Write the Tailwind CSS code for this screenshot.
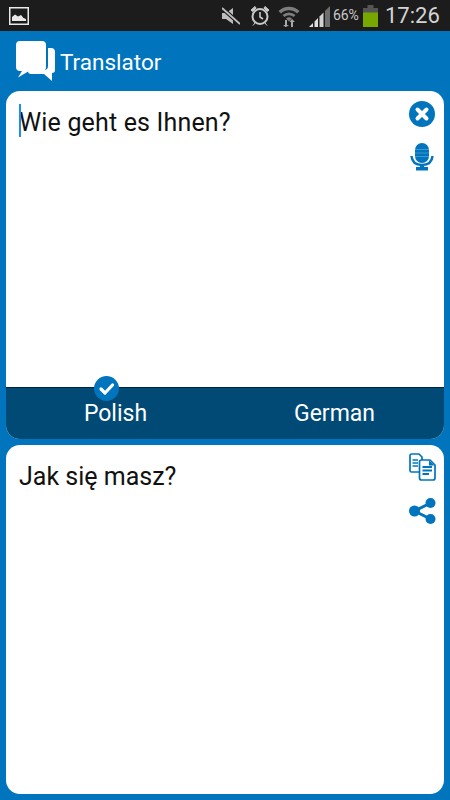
<!DOCTYPE html>
<html lang="en">
<head>
  <meta charset="UTF-8">
  <meta name="viewport" content="width=device-width, initial-scale=1.0">
  <title>Translator</title>
  <script src="https://cdn.jsdelivr.net/npm/@tailwindcss/browser@4"></script>
</head>
<body class="bg-[#0075be] font-['Roboto',sans-serif]">
  <div class="flex flex-col w-[450px] h-[800px] overflow-hidden">
    <!-- status bar -->
    <div class="flex items-center h-[31px] bg-[#1c1c1c] pl-[9px] shrink-0">
      <svg width="20" height="18" viewBox="0 0 20 18">
        <rect x="0.75" y="0.75" width="18.5" height="16.5" fill="none" stroke="#e8e8e8" stroke-width="1.5"/>
        <path d="M3 14V10L6 7.500 9 9.500 12 8 14.500 11 17 12V14Z" fill="#e8e8e8"/>
      </svg>
      <svg class="ml-[193px]" width="18" height="20" viewBox="0 0 18 20">
        <path d="M0 7H4L11 2V18L4 13H0Z" fill="#bdbdbd"/>
        <path d="M0 2L18 18" stroke="#1c1c1c" stroke-width="4"/>
        <path d="M0 2L18 18" stroke="#bdbdbd" stroke-width="1.800"/>
      </svg>
      <svg class="ml-[10px]" width="20" height="21" viewBox="0 0 20 21">
        <circle cx="10" cy="11.500" r="7.500" fill="none" stroke="#c8c8c8" stroke-width="2"/>
        <path d="M10 7V12L13 14" fill="none" stroke="#c8c8c8" stroke-width="1.600"/>
        <path d="M1 5L5 1.500 6 3 2.500 6.500ZM19 5L15 1.500 14 3 17.500 6.500ZM5 18L3 20.500M15 18L17 20.500" fill="#c8c8c8" stroke="#c8c8c8"/>
      </svg>
      <svg class="ml-[8px]" width="22" height="22" viewBox="0 0 22 22">
        <path d="M0.500 6A15 15 0 0 1 21.500 6L19 8.500A11.500 11.500 0 0 0 3 8.500Z" fill="#7d7d7d"/>
        <path d="M4.500 10A9.500 9.500 0 0 1 17.500 10L15.500 12A6.500 6.500 0 0 0 6.500 12Z" fill="#7d7d7d"/>
        <path d="M8 13.500A4.500 4.500 0 0 1 14 13.500L11 16.500Z" fill="#7d7d7d"/>
        <path d="M7 15V20H5L8 22.500 8 22 11 20H9V15ZM15 22V17H17L14 14 11.500 17H13V22Z" fill="#a8a8a8"/>
      </svg>
      <svg class="ml-[9px]" width="21" height="22" viewBox="0 0 21 22">
        <path d="M0 22L4 18V22ZM5.500 16.500L9 13V22H5.500Z" fill="#e0e0e0"/>
        <path d="M10.500 11.500L14.500 7.500V22H10.500Z" fill="#d0d0d0"/>
        <path d="M16 6L21 1V22H16Z" fill="#6e6e6e"/>
      </svg>
      <span class="ml-[3px] w-[27px] text-[14px] leading-[31px] text-[#c8c8c8] tracking-[-0.1px] whitespace-nowrap">66%</span>
      <svg class="ml-[3px]" width="15" height="22" viewBox="0 0 15 22">
        <rect x="4.500" y="0" width="6" height="3" fill="#555"/>
        <rect x="0" y="3" width="15" height="5" fill="#555"/>
        <rect x="0" y="7.500" width="15" height="14.500" fill="#76a800"/>
      </svg>
      <span class="ml-[7px] text-[22px] leading-[31px] text-[#d4d4d4] whitespace-nowrap">17:26</span>
    </div>

    <!-- app bar -->
    <div class="flex items-center h-[60px] pl-[16px] shrink-0">
      <svg width="40" height="41" viewBox="0 0 40 41">
        <path d="M4 0H26A4 4 0 0 1 30 4V26A4 4 0 0 1 26 30H13L2 36.500 6 30H4A4 4 0 0 1 0 26V4A4 4 0 0 1 4 0Z" fill="#fff"/>
        <path d="M32 7H35A4 4 0 0 1 39 11V29A3 3 0 0 1 36 32V40L28 33H15A3 3 0 0 1 12 30V29H28A4 4 0 0 0 32 25Z" fill="#fff"/>
      </svg>
      <span class="ml-[4px] mt-[3px] text-[22.500px] text-white">Translator</span>
    </div>

    <!-- input card -->
    <div class="flex flex-col mx-[6px] h-[348px] bg-white rounded-[14px] overflow-hidden shrink-0">
      <div class="relative flex-1 pl-[13px] pr-[44px] pt-[13px]">
        <div class="relative pt-[2px] text-[25px] tracking-[0.17px] leading-[33px] text-[#111]">
          <span class="absolute left-0 top-[0px] w-[2px] h-[33px] bg-[#1d8df0]"></span>Wie geht es Ihnen?
        </div>
        <div class="absolute right-[9px] top-[10px] flex flex-col items-center gap-[16px]">
          <svg width="26" height="26" viewBox="0 0 26 26">
            <circle cx="13" cy="13" r="13" fill="#0075be"/>
            <path d="M8.500 8.500L17.500 17.500M17.500 8.500L8.500 17.500" stroke="#fff" stroke-width="4" stroke-linecap="round"/>
          </svg>
          <svg width="24" height="28" viewBox="0 0 24 28">
            <rect x="5" y="0" width="14" height="20" rx="7" fill="#0075be"/>
            <path d="M5 6.500H19M5 10H19M5 13.500H19" stroke="#fff" stroke-opacity="0.300" stroke-width="0.800"/>
            <path d="M1.500 13C2 19 6 22 12 22S22 19 22.500 13" fill="none" stroke="#0075be" stroke-width="2.500"/>
            <path d="M10 22H14V24H18V27.500H6V24H10Z" fill="#0075be"/>
          </svg>
        </div>
      </div>
      <div class="relative flex h-[52px] bg-[#004a75] border-t border-[#00243f] shrink-0">
        <div class="flex-1 text-center text-[23px] leading-[52px] text-white">Polish</div>
        <div class="flex-1 text-center text-[23px] leading-[52px] text-white">German</div>
        <svg class="absolute left-[88px] top-[-12px]" width="25" height="25" viewBox="0 0 25 25">
          <circle cx="12.500" cy="12.500" r="12.500" fill="#0075be"/>
          <path d="M7 13L11 17 18.500 9" fill="none" stroke="#fff" stroke-width="3.200" stroke-linecap="round" stroke-linejoin="round"/>
        </svg>
      </div>
    </div>

    <!-- output card -->
    <div class="relative mx-[6px] mt-[6px] h-[349px] bg-white rounded-[14px] pl-[13px] pr-[44px] pt-[15px] shrink-0">
      <div class="text-[25px] leading-[33px] text-[#111]">Jak się masz?</div>
      <div class="absolute right-[8px] top-[8px] flex flex-col items-center gap-[17px]">
        <svg width="27" height="28" viewBox="0 0 27 28">
          <path d="M2.500 1H10L13 4V19H2.500A1.500 1.500 0 0 1 1 17.500V2.500A1.500 1.500 0 0 1 2.500 1Z" fill="#fff" stroke="#0075be" stroke-width="1.700"/>
          <path d="M3.500 7H9M3.500 10H9M3.500 13H9" stroke="#0075be" stroke-width="1.500"/>
          <path d="M12.500 7H21L26 12V25A2 2 0 0 1 24 27H12.500A2 2 0 0 1 10.500 25V9A2 2 0 0 1 12.500 7Z" fill="#fff" stroke="#0075be" stroke-width="1.700"/>
          <path d="M13.500 14H23M13.500 17.500H23M13.500 21H20" stroke="#0075be" stroke-width="1.800"/>
          <path d="M20 7.500V12.500H25.500Z" fill="#0075be"/>
        </svg>
        <svg width="27" height="26" viewBox="0 0 27 26">
          <path d="M21.500 5L5.500 13 21.500 21" fill="none" stroke="#0075be" stroke-width="3"/>
          <circle cx="21.500" cy="5" r="5" fill="#0075be"/>
          <circle cx="5.500" cy="13" r="5.500" fill="#0075be"/>
          <circle cx="21.500" cy="21" r="5" fill="#0075be"/>
        </svg>
      </div>
    </div>
  </div>
</body>
</html>
